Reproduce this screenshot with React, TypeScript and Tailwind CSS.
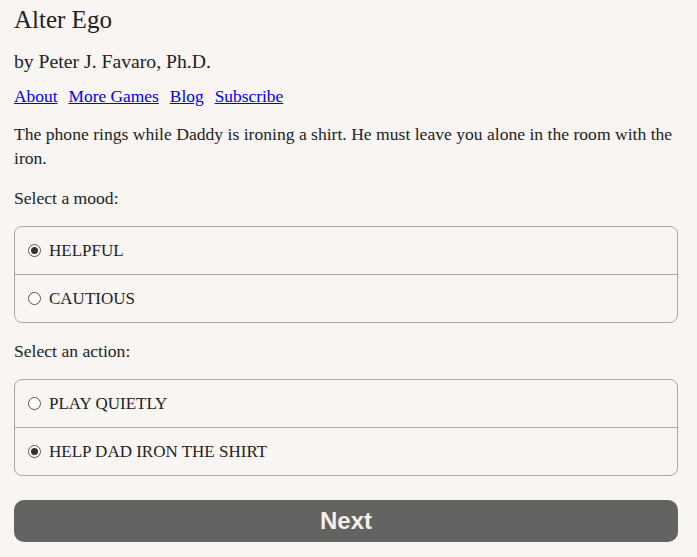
import React, { useState } from "react";

function Radio({ checked }: { checked: boolean }) {
  return (
    <span className="inline-flex h-[13px] w-[13px] shrink-0 items-center justify-center rounded-full border border-[#555] bg-white">
      {checked && <span className="h-[7px] w-[7px] rounded-full bg-[#333]" />}
    </span>
  );
}

function Group({ options, value, onChange }: { options: string[]; value: number; onChange: (i: number) => void }) {
  return (
    <div className="rounded-[8px] border border-[#aaa7a4]">
      {options.map((o, i) => (
        <div
          key={o}
          onClick={() => onChange(i)}
          className={`flex cursor-pointer items-center gap-[8px] pl-[13px] ${i > 0 ? "h-[48px] border-t border-[#aaa7a4]" : "h-[47px]"}`}
        >
          <Radio checked={value === i} />
          <span className="text-[17px] text-[#222]">{o}</span>
        </div>
      ))}
    </div>
  );
}

export default function App() {
  const [mood, setMood] = useState(0);
  const [action, setAction] = useState(1);
  return (
    <div
      className="min-h-[557px] bg-[#f8f5f2] pl-[14px] pr-[19px] pt-[4px] text-[#222]"
      style={{ fontFamily: '"Liberation Serif", serif' }}
    >
      <h1 className="text-[25px] leading-[32px]">Alter Ego</h1>
      <p className="mt-[11px] text-[19.7px] leading-[28px]">by Peter J. Favaro, Ph.D.</p>
      <div className="mt-[9px] flex gap-[11px] text-[17.4px] leading-[24px]">
        <a href="#" className="text-[#0000ee] underline">About</a>
        <a href="#" className="text-[#0000ee] underline">More Games</a>
        <a href="#" className="text-[#0000ee] underline">Blog</a>
        <a href="#" className="text-[#0000ee] underline">Subscribe</a>
      </div>
      <p className="mt-[14px] text-[17.6px] leading-[24px]">
        The phone rings while Daddy is ironing a shirt. He must leave you alone in the room with the iron.
      </p>
      <p className="mt-[16px] text-[17.6px] leading-[24px]">Select a mood:</p>
      <div className="mt-[16px]">
        <Group options={["HELPFUL", "CAUTIOUS"]} value={mood} onChange={setMood} />
      </div>
      <p className="mt-[16px] text-[17.6px] leading-[24px]">Select an action:</p>
      <div className="mt-[16px]">
        <Group options={["PLAY QUIETLY", "HELP DAD IRON THE SHIRT"]} value={action} onChange={setAction} />
      </div>
      <button
        className="mt-[24px] h-[42px] w-full rounded-[10px] bg-[#636361] text-[24px] font-bold text-[#f5efe8]"
        style={{ fontFamily: '"Liberation Sans", Arial, sans-serif' }}
      >
        Next
      </button>
    </div>
  );
}
